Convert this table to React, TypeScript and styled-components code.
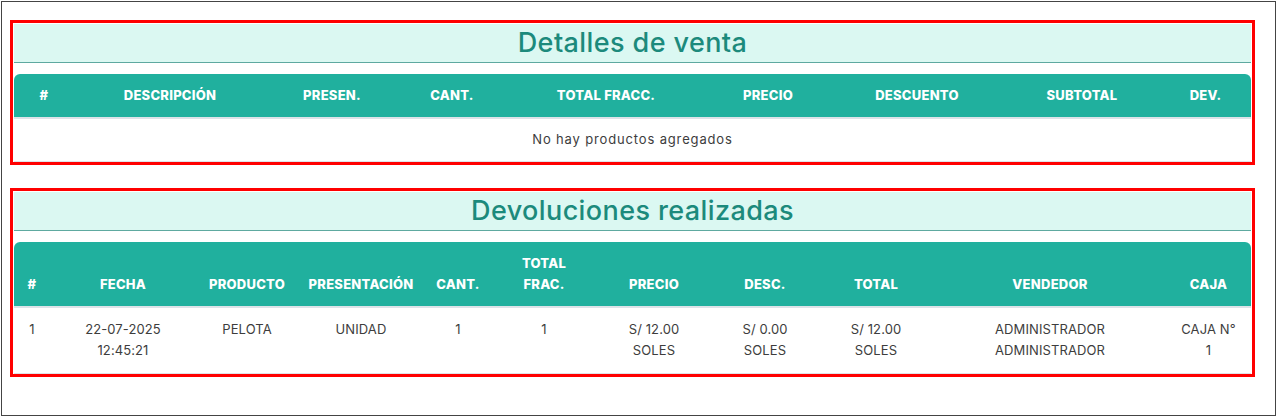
import React from "react";
import styled, { createGlobalStyle } from "styled-components";

const Global = createGlobalStyle`
  html, body { margin: 0; padding: 0; background: #ffffff; }
  body { font-family: Inter, "Open Sans", "Liberation Sans", sans-serif; }
  * { box-sizing: border-box; }
`;

const Frame = styled.div`
  margin: 1px;
  width: 1275px;
  height: 415px;
  border: 1px solid #444444;
  padding: 18px 20px 0 8px;
  display: flex;
  flex-direction: column;
  gap: 23px;
`;

const Section = styled.section`
  border: 3px solid #ff0000;
  padding: 1px 1px 0 1px;
  display: flex;
  flex-direction: column;
  gap: 11px;
`;

const TitleBar = styled.h2`
  margin: 0;
  height: 39px;
  background: #dbf8f2;
  border-bottom: 1px solid #5ea9a0;
  color: #1c8a7c;
  font-family: Inter, "Open Sans", sans-serif;
  font-weight: 500;
  font-size: 27px;
  letter-spacing: 0.4px;
  line-height: 38px;
  text-align: center;
`;

const Table = styled.table`
  width: 100%;
  table-layout: fixed;
  border-collapse: separate;
  border-spacing: 0;
`;

const Th = styled.th`
  background: #20b09e;
  color: #ffffff;
  font-size: 13px;
  font-weight: 800;
  letter-spacing: 0.25px;
  line-height: 21px;
  text-transform: uppercase;
  text-align: center;
  vertical-align: bottom;
  padding: 11px 4px;
  border-bottom: 2px solid #dde3e8;
  &:first-child { border-top-left-radius: 6px; }
  &:last-child { border-top-right-radius: 6px; }
`;

const Td = styled.td<{ $empty?: boolean }>`
  color: #3d3d3d;
  font-size: 13px;
  letter-spacing: ${(p) => (p.$empty ? "0.85px" : "0.1px")};
  line-height: 21px;
  text-align: center;
  vertical-align: top;
  padding: ${(p) => (p.$empty ? "10px 4px 11px" : "11px 4px 12px")};
  border-bottom: 1px solid #dfe3e8;
`;

type Col = { label: React.ReactNode; width: number };

const ventaCols: Col[] = [
  { label: "#", width: 60 },
  { label: "Descripción", width: 192 },
  { label: "Presen.", width: 132 },
  { label: "Cant.", width: 108 },
  { label: "Total Fracc.", width: 200 },
  { label: "Precio", width: 124 },
  { label: "Descuento", width: 174 },
  { label: "Subtotal", width: 156 },
  { label: "Dev.", width: 91 },
];

const devCols: Col[] = [
  { label: "#", width: 36 },
  { label: "Fecha", width: 146 },
  { label: "Producto", width: 102 },
  { label: "Presentación", width: 126 },
  { label: "Cant.", width: 68 },
  { label: <>Total<br />Frac.</>, width: 104 },
  { label: "Precio", width: 116 },
  { label: "Desc.", width: 106 },
  { label: "Total", width: 116 },
  { label: "Vendedor", width: 232 },
  { label: "Caja", width: 85 },
];

const devRows: string[][][] = [
  [
    ["1"],
    ["22-07-2025", "12:45:21"],
    ["PELOTA"],
    ["UNIDAD"],
    ["1"],
    ["1"],
    ["S/ 12.00", "SOLES"],
    ["S/ 0.00", "SOLES"],
    ["S/ 12.00", "SOLES"],
    ["ADMINISTRADOR", "ADMINISTRADOR"],
    ["CAJA N°", "1"],
  ],
];

const Head: React.FC<{ cols: Col[] }> = ({ cols }) => (
  <>
    <colgroup>
      {cols.map((c, i) => (
        <col key={i} style={{ width: c.width }} />
      ))}
    </colgroup>
    <thead>
      <tr>
        {cols.map((c, i) => (
          <Th key={i}>{c.label}</Th>
        ))}
      </tr>
    </thead>
  </>
);

export default function App() {
  return (
    <>
      <Global />
      <Frame>
        <Section>
          <TitleBar>Detalles de venta</TitleBar>
          <Table>
            <Head cols={ventaCols} />
            <tbody>
              <tr>
                <Td $empty colSpan={ventaCols.length}>
                  No hay productos agregados
                </Td>
              </tr>
            </tbody>
          </Table>
        </Section>
        <Section>
          <TitleBar>Devoluciones realizadas</TitleBar>
          <Table>
            <Head cols={devCols} />
            <tbody>
              {devRows.map((row, r) => (
                <tr key={r}>
                  {row.map((cell, c) => (
                    <Td key={c}>
                      {cell.map((line, l) => (
                        <React.Fragment key={l}>
                          {l > 0 && <br />}
                          {line}
                        </React.Fragment>
                      ))}
                    </Td>
                  ))}
                </tr>
              ))}
            </tbody>
          </Table>
        </Section>
      </Frame>
    </>
  );
}
